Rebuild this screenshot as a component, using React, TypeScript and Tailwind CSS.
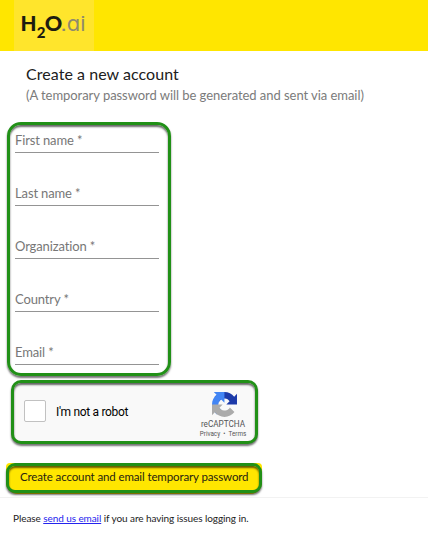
const FIELDS = ['First name', 'Last name', 'Organization', 'Country', 'Email'];

function Logo() {
  return (
    <svg width="80" height="51" viewBox="0 0 80 51" className="block">
      <g fontFamily="Lato, sans-serif" fontWeight="900" fill="#1d1c10">
        <text x="6.5" y="31" fontSize="20" textLength="16" lengthAdjust="spacingAndGlyphs">H</text>
        <text x="22.8" y="38" fontSize="15" textLength="8.7" lengthAdjust="spacingAndGlyphs">2</text>
        <text x="30.7" y="31" fontSize="20" textLength="17.5" lengthAdjust="spacingAndGlyphs">O</text>
      </g>
      <text
        x="46.5"
        y="31"
        fontSize="20.5"
        fontFamily="Inter, sans-serif"
        fontWeight="400"
        fill="#8f8b6c"
        textLength="25"
        lengthAdjust="spacingAndGlyphs"
        className="[font-feature-settings:'cv11','ss07']"
      >
        .ai
      </text>
    </svg>
  );
}

function RecaptchaMark() {
  return (
    <svg width="25" height="25" viewBox="0 0 64 64" className="block">
      <path fill="#1c3aa9" d="M64 31.955l-.033-1.37V4.687l-7.16 7.16C50.948 4.674 42.033.093 32.05.093c-10.4 0-19.622 4.96-25.458 12.64l11.736 11.86a15.55 15.55 0 0 1 4.754-5.334c2.05-1.6 4.952-2.906 8.968-2.906.485 0 .86.057 1.135.163 4.976.393 9.288 3.14 11.828 7.124l-8.307 8.307L64 31.953" />
      <path fill="#4285f4" d="M31.862.094l-1.37.033H4.594l7.16 7.16C4.58 13.147 0 22.06 0 32.046c0 10.4 4.96 19.622 12.64 25.458L24.5 45.768a15.55 15.55 0 0 1-5.334-4.754c-1.6-2.05-2.906-4.952-2.906-8.968 0-.485.057-.86.163-1.135.393-4.976 3.14-9.288 7.124-11.828l8.307 8.307L31.86.095" />
      <path fill="#ababab" d="M.001 32.045l.033 1.37v25.898l7.16-7.16c5.86 7.173 14.774 11.754 24.76 11.754 10.4 0 19.622-4.96 25.458-12.64l-11.736-11.86a15.55 15.55 0 0 1-4.754 5.334c-2.05 1.6-4.952 2.906-8.968 2.906-.485 0-.86-.057-1.135-.163-4.976-.393-9.288-3.14-11.828-7.124l8.307-8.307c-10.522.04-22.4.066-27.295-.005" />
    </svg>
  );
}

export default function App() {
  return (
    <div className="h-[540px] w-[428px] overflow-hidden bg-white font-[Lato,'Liberation_Sans',sans-serif] text-[#222]">
      <header className="h-[51px] bg-[#ffe600] pl-[14px]">
        <div className="h-full w-[80px] bg-[#ffe52c]">
          <Logo />
        </div>
      </header>

      <div className="h-[71px] pl-[26px] pt-[12px] whitespace-nowrap">
        <h1 className="text-[16px] leading-[22px] tracking-[0.05px] text-[#202020]">Create a new account</h1>
        <p className="text-[13px] leading-[20px] tracking-[-0.05px] text-[#7b7b7b]">
          (A temporary password will be generated and sent via email)
        </p>
      </div>

      <section className="ml-[7px] h-[254px] w-[164px] rounded-[14px] border-[3px] border-[#219017] pl-[5px] pt-[7px] shadow-[0_2px_2px_rgba(0,0,0,0.55),inset_0_2px_2px_rgba(0,0,0,0.6)]">
        {FIELDS.map((name) => (
          <div key={name} className="mb-[32px] h-[21px] w-[144px] border-b border-[#949494] text-[13px] leading-[17px] tracking-[-0.13px] text-[#777]">
            {name} *
          </div>
        ))}
      </section>

      <section className="ml-[11px] mt-[4px] flex h-[64px] w-[247px] rounded-[10px] border-[3px] border-[#219017] bg-[#f9f9f9] font-[Roboto,sans-serif] shadow-[0_2px_2px_rgba(0,0,0,0.55),inset_0_2px_2px_rgba(0,0,0,0.6)]">
        <div className="ml-[10px] mt-[17px] size-[22px] rounded-[2px] border border-[#c1c1c1] bg-white" />
        <div className="ml-[10px] mt-[21px] text-[12px] leading-[16px] tracking-[-0.32px] text-black">I'm not a robot</div>
        <div className="ml-auto mr-[6px] flex w-[52px] flex-col items-center whitespace-nowrap pt-[9px] text-[#555]">
          <div className="ml-[2px]"><RecaptchaMark /></div>
          <div className="mt-[2px] text-[8.2px] leading-[10px]">reCAPTCHA</div>
          <div className="text-[6.3px] leading-[10px]">Privacy&nbsp; • &nbsp;Terms</div>
        </div>
      </section>

      <div className="ml-[6px] mt-[19px] h-[31px] w-[256px] rounded-t-[4px] rounded-b-[12px] bg-[#ffe600]">
        <button className="block h-[30px] w-[256px] whitespace-nowrap rounded-[9px] border-[3px] border-[#219017] bg-[#ffe600] pb-[3px] pl-[11px] text-left text-[11.5px] leading-[20px] tracking-[-0.12px] text-[#272310] shadow-[0_2px_2px_rgba(0,0,0,0.55),inset_0_2px_2px_rgba(0,0,0,0.6)]">
          Create account and email temporary password
        </button>
      </div>

      <footer className="mt-[3px] border-t border-[#f2f2f2] pl-[13px] pt-[12px] text-[10px] leading-[16px] tracking-[-0.08px] text-[#222]">
        Please <a className="text-[#2424ee] underline" href="#">send us email</a> if you are having issues logging in.
      </footer>
    </div>
  );
}
